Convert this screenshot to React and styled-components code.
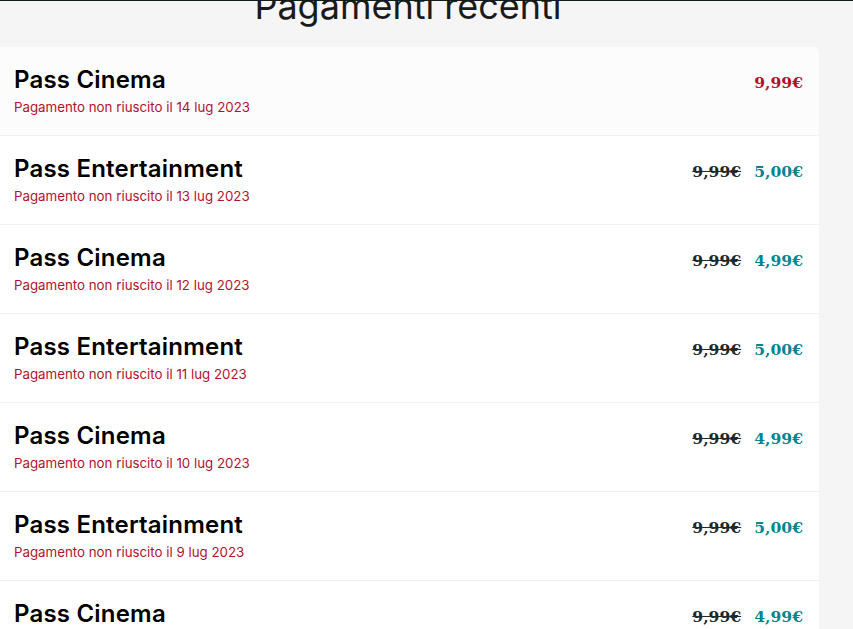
import React from 'react';
import styled, { createGlobalStyle } from 'styled-components';

const GlobalStyle = createGlobalStyle`
  html, body {
    margin: 0;
    padding: 0;
    background: #f5f5f5;
    overflow: hidden;
  }
  body {
    border-top: 1px solid #0e1c1c;
    font-family: Inter, "Liberation Sans", sans-serif;
  }
`;

const Page = styled.div`
  width: 853px;
  height: 628px;
  overflow: hidden;
`;

const Title = styled.h1`
  margin: -16px 0 0 0;
  width: 816px;
  text-align: center;
  font-family: Inter, Roboto, sans-serif;
  font-weight: 400;
  font-size: 36px;
  line-height: 42px;
  color: #1a1a1a;
`;

const Card = styled.div`
  width: 819px;
  margin-top: 20px;
  background: #fff;
  border-radius: 0 6px 0 0;
  overflow: hidden;
`;

const Row = styled.div`
  height: 88px;
  display: flex;
  justify-content: space-between;
  align-items: flex-start;
  padding: 0 16px 0 14px;
  border-bottom: 1px solid #f1f1f1;
  background: ${p => (p.$first ? '#fcfcfc' : '#fff')};
`;

const Info = styled.div`
  display: flex;
  flex-direction: column;
  padding-top: 19px;
`;

const Name = styled.div`
  font-family: Inter, sans-serif;
  font-weight: 600;
  font-size: 24px;
  line-height: 28px;
  letter-spacing: 0.2px;
  color: #000;
`;

const Status = styled.div`
  margin-top: 5px;
  font-family: Inter, sans-serif;
  font-size: 13.3px;
  line-height: 16px;
  color: #b3122e;
`;

const Prices = styled.div`
  display: flex;
  gap: 13px;
  padding-top: 26px;
  font-family: "DejaVu Serif", serif;
  font-weight: 700;
  font-size: 15.6px;
  line-height: 20px;
`;

const Price = styled.span`
  color: ${p => (p.$tone === 'red' ? '#b5102c' : p.$tone === 'teal' ? '#00858f' : '#1c2a2e')};
  text-decoration: ${p => (p.$old ? 'line-through' : 'none')};
`;

const payments = [
  { name: 'Pass Cinema', date: '14 lug 2023', price: '9,99€' },
  { name: 'Pass Entertainment', date: '13 lug 2023', old: '9,99€', price: '5,00€' },
  { name: 'Pass Cinema', date: '12 lug 2023', old: '9,99€', price: '4,99€' },
  { name: 'Pass Entertainment', date: '11 lug 2023', old: '9,99€', price: '5,00€' },
  { name: 'Pass Cinema', date: '10 lug 2023', old: '9,99€', price: '4,99€' },
  { name: 'Pass Entertainment', date: '9 lug 2023', old: '9,99€', price: '5,00€' },
  { name: 'Pass Cinema', date: '8 lug 2023', old: '9,99€', price: '4,99€' },
];

export default function App() {
  return (
    <Page>
      <GlobalStyle />
      <Title>Pagamenti recenti</Title>
      <Card>
        {payments.map((p, i) => (
          <Row key={i} $first={i === 0}>
            <Info>
              <Name>{p.name}</Name>
              <Status>Pagamento non riuscito il {p.date}</Status>
            </Info>
            <Prices>
              {p.old && <Price $old>{p.old}</Price>}
              <Price $tone={p.old ? 'teal' : 'red'}>{p.price}</Price>
            </Prices>
          </Row>
        ))}
      </Card>
    </Page>
  );
}
